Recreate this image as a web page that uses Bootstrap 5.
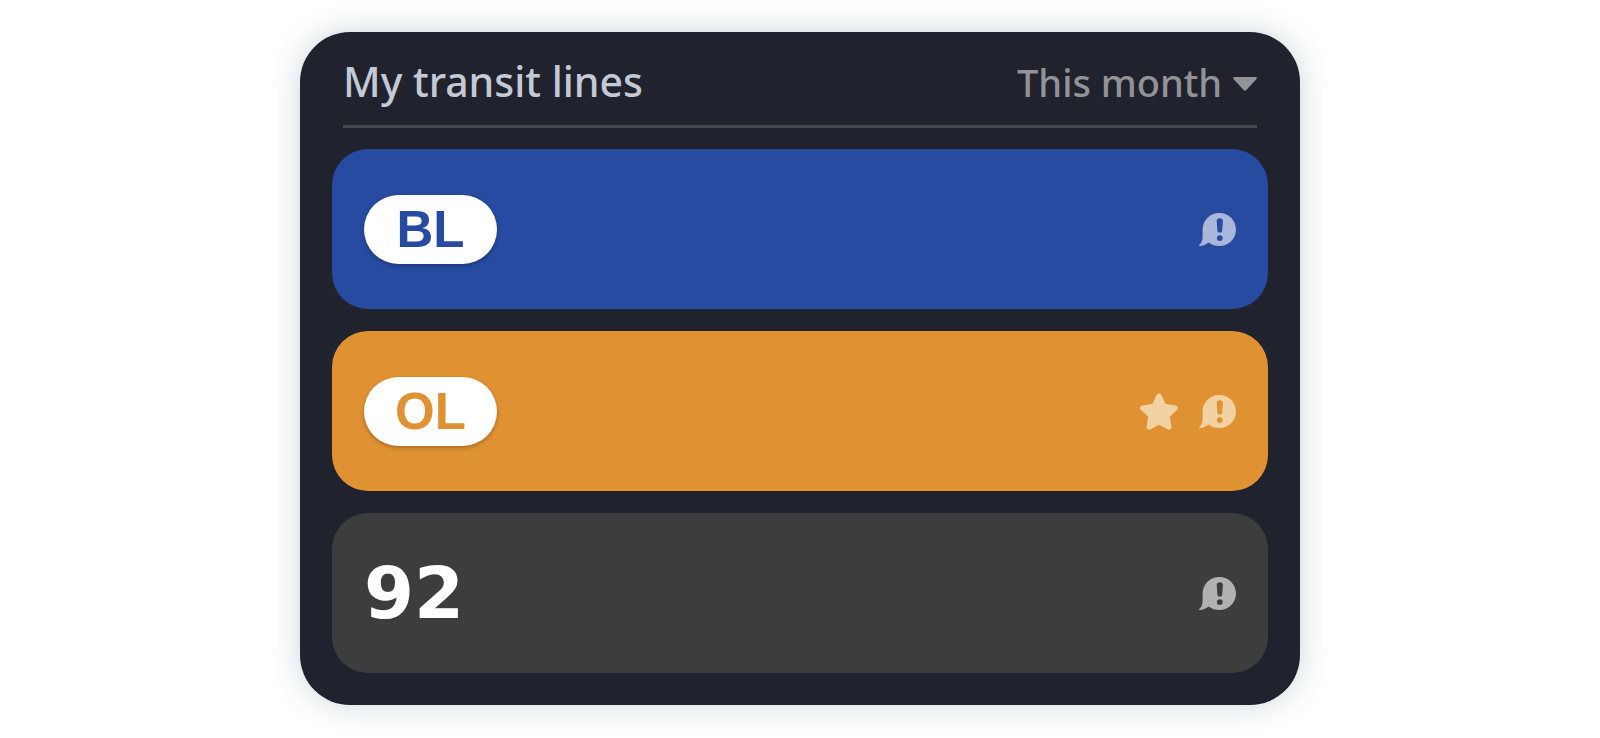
<!DOCTYPE html>
<html lang="en">
<head>
<meta charset="utf-8">
<meta name="viewport" content="width=device-width, initial-scale=1">
<title>My transit lines</title>
<link href="https://cdn.jsdelivr.net/npm/bootstrap@5.3.0/dist/css/bootstrap.min.css" rel="stylesheet">
<script defer src="https://cdn.jsdelivr.net/npm/bootstrap@5.3.0/dist/js/bootstrap.bundle.min.js"></script>
<style>
  body { background: #fff; font-family: "Noto Sans", "Open Sans", sans-serif; }
  main { padding: 32px 16px; }
  .transit-panel {
    max-width: 1000px;
    padding: 0 32px 32px;
    border-radius: 50px;
    background: #20222d;
    box-shadow: 0 0 32px rgba(50, 85, 100, .24);
  }
  .panel-head {
    margin: 0 11px 21px;
    padding: 19px 0 13px 0;
    border-bottom: 3px solid #45474e;
  }
  .panel-title { font-size: 41px; line-height: 60px; font-weight: 500; color: #c3c9d5; }
  .period-select {
    appearance: none;
    border: 0;
    padding: 0 34px 0 0;
    font-size: 38px;
    font-weight: 500;
    line-height: 60px;
    color: #929297;
    background: transparent url("data:image/svg+xml,%3Csvg xmlns='http://www.w3.org/2000/svg' viewBox='0 0 24 17'%3E%3Cpath d='M1.500 3h21q2.200.3.800 2.200L13.400 16q-1.400 1.400-2.800 0L.7 5.200Q-.7 3.300 1.500 3z' fill='%23929297'/%3E%3C/svg%3E") no-repeat right center / 24px 17px;
  }
  .line-list { gap: 22px; }
  .line-row { min-height: 160px; padding: 0 32px; border-radius: 36px; color: #fff; }
  .line-blue { background: #264ba1; --line-color: #264ba1; --icon-color: #a8b7da; }
  .line-orange { background: #e09132; --line-color: #e09132; --icon-color: #f2d2a2; }
  .line-bus { background: #3d3d3d; --icon-color: #b1b1b1; }
  .line-pill {
    width: 133px;
    font: 700 51px/69px "Liberation Sans", Arial, sans-serif;
    color: var(--line-color);
    background: #fff;
    box-shadow: 0 2px 4px rgba(0, 0, 0, .25);
  }
  .line-number { font: 700 72px/80px "DejaVu Sans", sans-serif; }
  .line-icons { gap: 21px; color: var(--icon-color); }
</style>
</head>
<body>
<svg class="d-none" aria-hidden="true">
  <symbol id="alert" viewBox="0 0 37 33">
    <path fill="currentColor" fill-rule="evenodd" d="M20.300 0C29.600 0 37 7.300 37 16.500S29.600 33 20.300 33c-4.100 0-7.600-1.400-10.500-3.600C7 31.300 4.200 32.700.6 33c-.7 0-.8-.7-.3-1.100C3 29.800 3.600 26.800 3.600 23v-6.500C3.600 7.300 11 0 20.300 0zM20.800 5.300c-2 0-3.200.9-3.100 2.800l.7 9.600c.1 1.300 1 1.900 2.400 1.900s2.300-.6 2.400-1.900l.7-9.600c.1-1.900-1.100-2.800-3.100-2.800zM20.800 22.200a2.900 2.900 0 1 0 0 5.800 2.900 2.900 0 0 0 0-5.800z"/>
  </symbol>
  <symbol id="star" viewBox="0 0 38 37">
    <path fill="currentColor" stroke="currentColor" stroke-width="5" stroke-linejoin="round" d="M19 3l5 10.300 11.300 1.700-8.200 8L29 34.200l-10-5.300-10 5.300L10.900 23l-8.200-8L14 13.300z"/>
  </symbol>
</svg>

<main class="container-fluid">
  <section class="transit-panel mx-auto">
    <header class="panel-head d-flex justify-content-between align-items-baseline">
      <h1 class="panel-title m-0">My transit lines</h1>
      <select class="period-select" aria-label="Period">
        <option>This month</option>
      </select>
    </header>
    <ul class="line-list list-unstyled d-flex flex-column m-0">
      <li class="line-row line-blue d-flex align-items-center justify-content-between">
        <span class="line-pill rounded-pill text-center">BL</span>
        <span class="line-icons d-flex align-items-center">
          <svg width="37" height="33" role="img" aria-label="Alert"><use href="#alert"/></svg>
        </span>
      </li>
      <li class="line-row line-orange d-flex align-items-center justify-content-between">
        <span class="line-pill rounded-pill text-center">OL</span>
        <span class="line-icons d-flex align-items-center">
          <svg width="38" height="37" role="img" aria-label="Favorite"><use href="#star"/></svg>
          <svg width="37" height="33" role="img" aria-label="Alert"><use href="#alert"/></svg>
        </span>
      </li>
      <li class="line-row line-bus d-flex align-items-center justify-content-between">
        <span class="line-number">92</span>
        <span class="line-icons d-flex align-items-center">
          <svg width="37" height="33" role="img" aria-label="Alert"><use href="#alert"/></svg>
        </span>
      </li>
    </ul>
  </section>
</main>
</body>
</html>
